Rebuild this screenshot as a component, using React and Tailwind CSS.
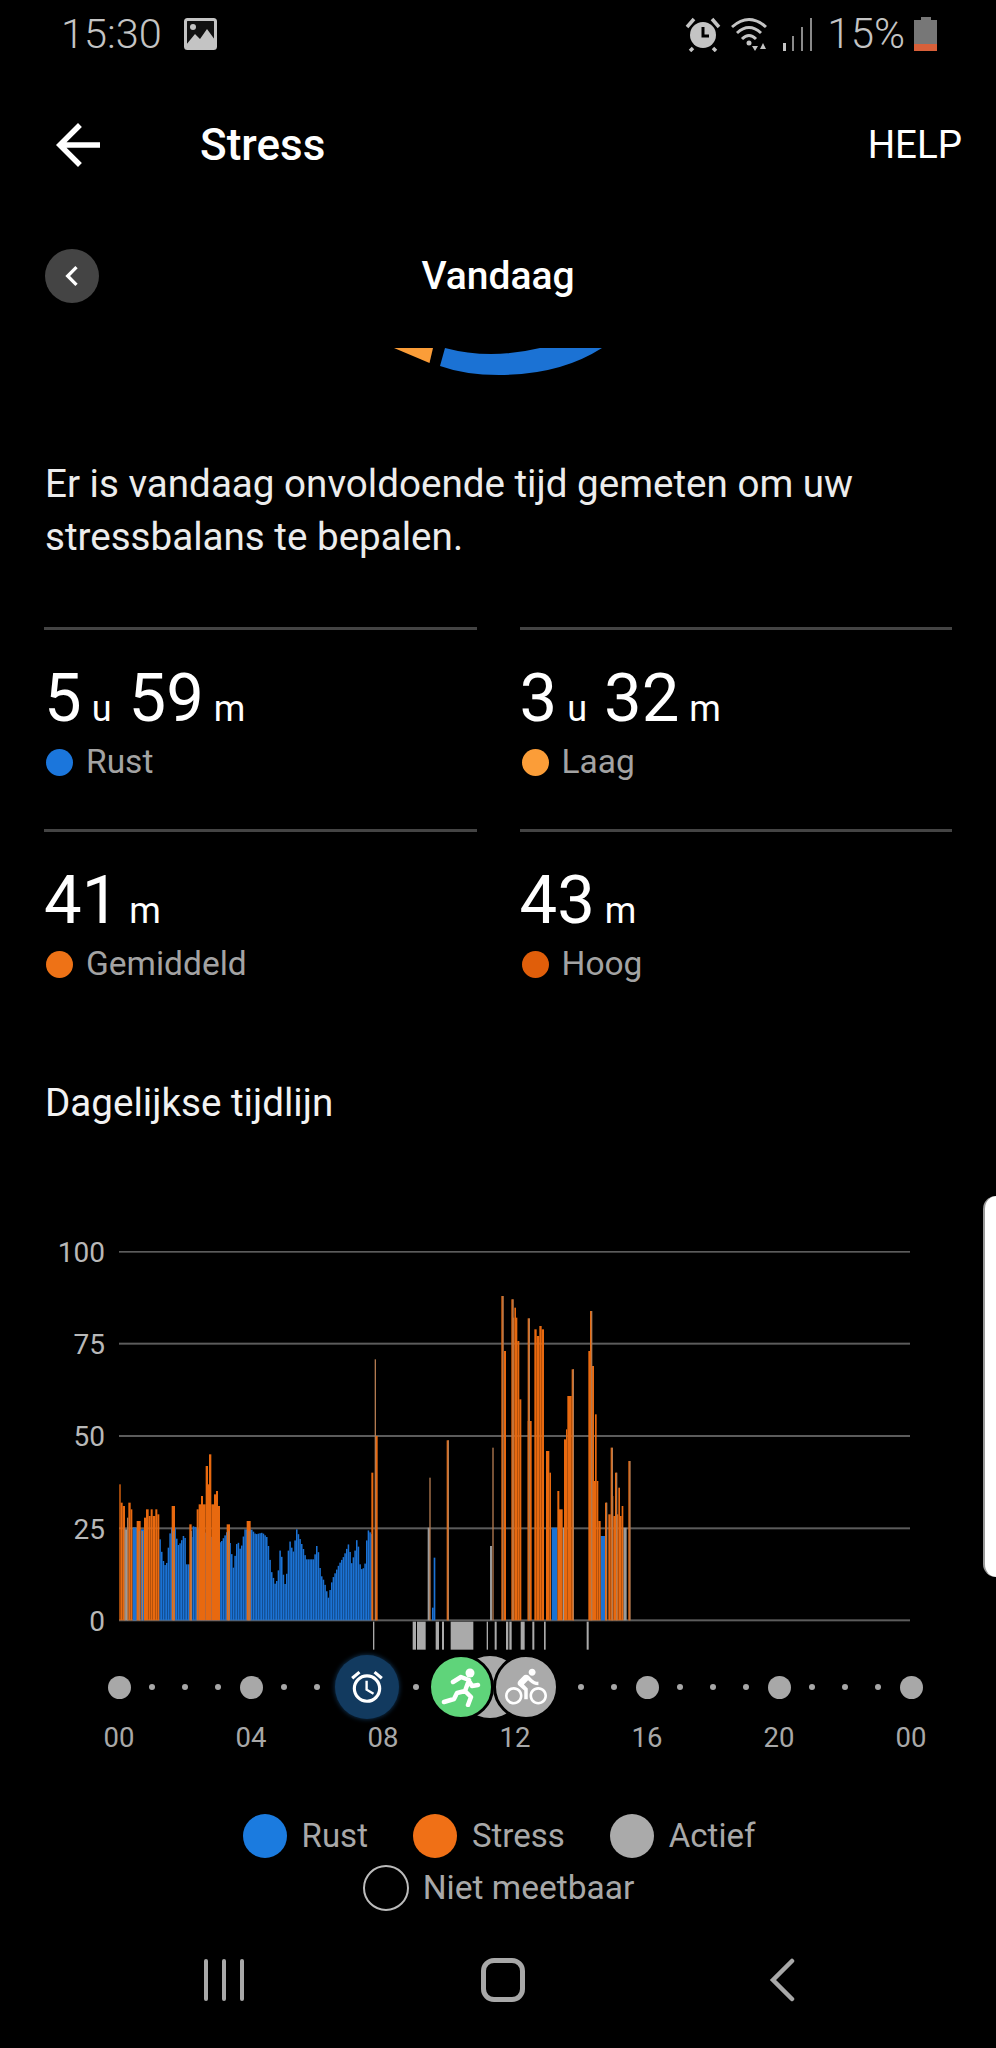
import { MdArrowBack, MdChevronLeft, MdDirectionsBike, MdAccessAlarm } from 'react-icons/md';

const ORANGE = '#e8690f';
const BLUE = '#1b72d4';
const MUTED = '#b27a50';

// chart coordinates are 3x page pixels; the baseline sits at y=1168
const blueLine = [
  [478, 925], [484, 970], [490, 1000], [497, 1005], [503, 950], [510, 890], [525, 890], [530, 945], [540, 935], [552, 905],
  [558, 1000], [568, 1000], [575, 885], [590, 890], [660, 935], [672, 915], [680, 900], [690, 945], [698, 1010], [710, 925],
  [720, 960], [732, 895], [752, 895], [765, 910], [785, 905], [800, 920], [812, 1020], [825, 1065], [832, 1030], [840, 935],
  [846, 1020], [855, 1070], [864, 945], [870, 925], [876, 975], [888, 895], [900, 930], [910, 960], [916, 985], [940, 985],
  [950, 935], [960, 1030], [970, 1050], [983, 1100], [995, 1045], [1015, 1000], [1030, 975], [1045, 935], [1052, 1000],
  [1062, 965], [1070, 915], [1078, 1000], [1085, 1020], [1094, 995], [1100, 895], [1118, 915],
];

const blueTop = (x) => {
  for (let i = 1; i < blueLine.length; i++) {
    const [x0, y0] = blueLine[i - 1];
    const [x1, y1] = blueLine[i];
    if (x <= x1) return y0 + ((y1 - y0) * (x - x0)) / (x1 - x0);
  }
  return 915;
};

const blueBars = [];
for (let x = 478; x < 1118; x += 5) blueBars.push(x);

// [start, end, top]
const greyBars = [[375, 385, 895], [398, 410, 890], [1283, 1290, 890], [1470, 1476, 945], [1688, 1692, 890], [1870, 1880, 890]];
const blueExtra = [[398, 410, 890], [422, 432, 895], [1296, 1301, 1130], [1301, 1306, 980], [1655, 1672, 890], [1802, 1815, 915]];
const orangeBars = [
  [358, 362, 760], [362, 368, 815], [368, 375, 825], [385, 392, 815], [392, 397, 835], [410, 422, 870],
  [432, 438, 860], [438, 446, 835], [446, 452, 855], [452, 458, 835], [458, 466, 855], [466, 472, 835], [472, 478, 850],
  [515, 525, 825], [568, 575, 880], [590, 596, 835], [596, 603, 820], [603, 609, 795], [609, 617, 820], [617, 624, 705],
  [624, 627, 760], [627, 634, 670], [634, 642, 820], [642, 648, 790], [648, 654, 780], [654, 660, 825], [680, 690, 880], [740, 752, 870],
  [1114, 1120, 725], [1125, 1133, 615],
  [1340, 1346, 628], [1504, 1510, 195], [1512, 1518, 360], [1534, 1540, 205], [1538, 1543, 260], [1543, 1548, 230], [1548, 1552, 260],
  [1552, 1558, 330], [1558, 1564, 505], [1583, 1588, 262], [1583, 1595, 570], [1603, 1610, 295], [1610, 1618, 315],
  [1618, 1625, 285], [1625, 1632, 295], [1638, 1648, 660], [1648, 1653, 725], [1672, 1678, 780], [1676, 1688, 835],
  [1692, 1698, 625], [1698, 1702, 595], [1702, 1715, 495], [1715, 1722, 415], [1765, 1772, 360], [1770, 1776, 240],
  [1776, 1782, 405], [1782, 1785, 750], [1785, 1790, 550], [1790, 1795, 750], [1795, 1802, 870], [1815, 1821, 815],
  [1825, 1832, 850], [1832, 1837, 650], [1835, 1840, 795], [1840, 1845, 855], [1845, 1850, 725], [1850, 1855, 850],
  [1855, 1860, 770], [1860, 1865, 855], [1865, 1870, 825], [1885, 1890, 690],
];
const mutedLines = [[372, 890], [381, 860], [416, 900], [425, 900], [519, 900], [572, 900], [684, 900], [745, 900], [1124, 385], [1288, 740], [1343, 628], [1477, 650], [1507, 195], [1537, 205], [1586, 262], [1718, 415], [1773, 240], [1818, 815], [1835, 650], [1848, 725], [1888, 690]];

const ticks = [
  [1119, 4], [1238, 10], [1251, 26], [1307, 10], [1326, 6], [1352, 68],
  [1460, 4], [1484, 6], [1518, 7], [1528, 7], [1562, 12], [1597, 6], [1632, 5], [1760, 6],
];

const hours = Array.from({ length: 25 }, (_, i) => i);

function Stat({ value, dot, label }) {
  return (
    <div className="border-t-[3px] border-[#444] h-[202px]">
      <div className="flex items-baseline h-[105px] pt-[33px] text-white">
        {value.map(([n, u]) => (
          <span key={u} className="mr-[17px]">
            <span className="text-[67px] leading-[70px]">{n}</span>
            <span className="text-[36px] ml-[10px]">{u}</span>
          </span>
        ))}
      </div>
      <div className="flex items-center mt-[7px] h-[40px]">
        <span className={`w-[27px] h-[27px] rounded-full ml-[2px] ${dot}`} />
        <span className="ml-[13px] text-[33.5px] text-[#a3a3a3]">{label}</span>
      </div>
    </div>
  );
}

function Legend({ dot, label }) {
  return (
    <div className="flex items-center">
      <span className={`w-[44px] h-[44px] rounded-full ${dot}`} />
      <span className="ml-[15px] text-[33px] text-[#a8a8a8]">{label}</span>
    </div>
  );
}

export default function App() {
  return (
    <div className="relative w-[996px] h-[2048px] overflow-hidden bg-black font-['Roboto',sans-serif]">
      {/* status bar */}
      <div className="flex items-center h-[68px] pl-[61px] pr-[59px] text-[#c4c4c4]">
        <span className="text-[41.5px] font-light">15:30</span>
        <svg className="ml-[22px]" width="33" height="32" viewBox="0 0 33 32">
          <rect x="1.5" y="1.5" width="30" height="29" rx="2" fill="#111" stroke="#c4c4c4" strokeWidth="3" />
          <circle cx="9" cy="9" r="3" fill="#c4c4c4" />
          <path d="M2 27 11 16 16 21 23 11 31 22V30H2Z" fill="#c4c4c4" />
        </svg>
        <svg className="ml-auto" width="38" height="36" viewBox="0 0 38 36">
          <circle cx="19" cy="19" r="13" fill="#c4c4c4" />
          <path d="M19 11v9h6" fill="none" stroke="#000" strokeWidth="3" />
          <path d="M3 11 10 3M35 11 28 3M9 32 6 35M29 32 32 35" stroke="#c4c4c4" strokeWidth="3.5" />
        </svg>
        <svg className="ml-[9px]" width="40" height="36" viewBox="0 0 40 36">
          <path d="M1 11Q18-4 35 11M6 17Q18 6 30 17M11 23Q18 16 25 23" fill="none" stroke="#c4c4c4" strokeWidth="3" />
          <circle cx="18" cy="27" r="2.5" fill="#c4c4c4" />
          <path d="M21 30 24 35 27 30ZM29 33 32 27 35 33Z" fill="#c4c4c4" />
        </svg>
        <svg className="ml-[11px]" width="32" height="34" viewBox="0 0 32 34">
          <rect x="1" y="26" width="3" height="8" fill="#c4c4c4" />
          <rect x="10" y="19" width="2" height="15" fill="#8a8a8a" />
          <rect x="19" y="10" width="2" height="24" fill="#8a8a8a" />
          <rect x="28" y="1" width="2" height="33" fill="#8a8a8a" />
        </svg>
        <span className="ml-[13px] text-[42px] font-light leading-none">15%</span>
        <div className="ml-[9px] flex flex-col items-center w-[23px]">
          <span className="w-[10px] h-[3px] bg-[#777]" />
          <span className="w-[23px] h-[24px] bg-[#777]" />
          <span className="w-[23px] h-[7px] bg-[#d8603a]" />
        </div>
      </div>

      {/* title bar */}
      <div className="flex items-center h-[154px] pl-[45px] pr-[34px] text-white">
        <MdArrowBack className="text-[66px]" />
        <span className="ml-[89px] text-[44px] font-medium">Stress</span>
        <span className="ml-auto text-[38.5px]">HELP</span>
      </div>

      {/* date row */}
      <div className="relative flex items-center justify-center h-[108px]">
        <span className="text-[39px] font-medium text-white">Vandaag</span>
        <button className="absolute left-[45px] top-[27px] flex items-center justify-center w-[54px] h-[54px] rounded-full bg-[#444]">
          <MdChevronLeft className="text-[40px] text-white" />
        </button>
      </div>

      {/* gauge remainder */}
      <div className="mt-[18px] h-[28px] flex justify-center">
        <svg width="996" height="28" viewBox="0 348 996 28">
          <path d="M394 348H433L429.5 363Z" fill="#fb9d38" />
          <path d="M445 348Q490 360 540 348H602Q560 375 499 375Q465 375 440 366Z" fill={BLUE} />
        </svg>
      </div>

      <p className="mt-[81px] px-[45px] text-[38.6px] leading-[53px] text-[#ececec]">
        Er is vandaag onvoldoende tijd gemeten om uw
        <br />
        stressbalans te bepalen.
      </p>

      {/* totals */}
      <div className="mt-[64px] mx-[44px] grid grid-cols-2 gap-x-[43px] h-[404px]">
        <Stat value={[['5', 'u'], ['59', 'm']]} dot="bg-[#1b76dc]" label="Rust" />
        <Stat value={[['3', 'u'], ['32', 'm']]} dot="bg-[#fb9d38]" label="Laag" />
        <Stat value={[['41', 'm']]} dot="bg-[#ee7216]" label="Gemiddeld" />
        <Stat value={[['43', 'm']]} dot="bg-[#e05e0a]" label="Hoog" />
      </div>

      <h2 className="mt-[50px] px-[45px] text-[38.6px] leading-[44px] text-[#f2f2f2]">Dagelijkse tijdlijn</h2>

      {/* chart */}
      <div className="mt-[126px] flex">
        <div className="w-[105px] h-[400px] shrink-0 text-right text-[28px] leading-[30px] text-[#b8b8b8]">
          {['100', '75', '50', '25', '0'].map((v) => (
            <div key={v} className="h-[92.2px] -translate-y-[13px] flex items-start justify-end">
              {v}
            </div>
          ))}
        </div>
        <svg className="ml-[14px]" width="791" height="400" viewBox="357 60 2373 1200">
          {[62, 338, 615, 892, 1168].map((y) => (
            <rect key={y} x="357" y={y - 3} width="2373" height="6" fill="#5c5c5c" />
          ))}
          {greyBars.map(([a, b, t]) => (
            <rect key={`g${a}`} x={a} y={t} width={b - a} height={1168 - t} fill="#9a9a9a" />
          ))}
          {blueBars.map((x) => (
            <rect key={x} x={x} y={blueTop(x)} width="4.6" height={1168 - blueTop(x)} fill={BLUE} />
          ))}
          {blueExtra.map(([a, b, t]) => (
            <rect key={`b${a}`} x={a} y={t} width={b - a} height={1168 - t} fill={BLUE} />
          ))}
          {orangeBars.map(([a, b, t]) => (
            <rect key={`o${a}-${t}`} x={a} y={t} width={b - a} height={1168 - t} fill={ORANGE} />
          ))}
          {mutedLines.map(([x, t]) => (
            <rect key={`m${x}`} x={x} y={t} width="4" height={1168 - t} fill={MUTED} />
          ))}
          {ticks.map(([x, w]) => (
            <rect key={`t${x}`} x={x} y="1172" width={w} height="84" fill="#aaa" />
          ))}
        </svg>
      </div>

      {/* activity timeline */}
      <div className="relative h-[72px] pl-[102.5px]">
        <div className="flex items-center h-[72px]">
          {hours.map((h) => (
            <div key={h} className="flex items-center justify-center w-[33px] shrink-0">
              <span className={h % 4 === 0 ? 'w-[23px] h-[23px] rounded-full bg-[#a8a8a8]' : 'w-[6px] h-[6px] rounded-full bg-[#a8a8a8]'} />
            </div>
          ))}
        </div>
        <div className="absolute left-[459px] top-[5px] w-[62px] h-[62px] rounded-full bg-[#aaa]" />
        <div className="absolute left-[335px] top-[4px] flex items-center justify-center w-[64px] h-[64px] rounded-full bg-[#123a5f] shadow-[0_0_5px_#123a5f]">
          <MdAccessAlarm className="text-[38px] text-white" />
        </div>
        <div className="absolute left-[428px] top-[3px] flex items-center justify-center w-[66px] h-[66px] rounded-full bg-[#5fd47a] border-[3px] border-black">
          <svg width="40" height="40" viewBox="0 0 40 40">
            <circle cx="29" cy="6" r="4.5" fill="#fff" />
            <path d="M12 15 20 10 28 13 24 24 30 30 27 38M28 14 31 19 37 18M24 24 16 26 13 32 3 35" fill="none" stroke="#fff" strokeWidth="4.5" strokeLinejoin="round" strokeLinecap="round" />
          </svg>
        </div>
        <div className="absolute left-[493px] top-[3px] flex items-center justify-center w-[66px] h-[66px] rounded-full bg-[#aaa] border-[3px] border-black">
          <MdDirectionsBike className="text-[42px] text-white" />
        </div>
      </div>

      {/* hour labels */}
      <div className="flex pl-[53px] text-[27.5px] leading-[30px] text-[#a8a8a8]">
        {['00', '04', '08', '12', '16', '20', '00'].map((t, i) => (
          <span key={i} className="w-[132px] shrink-0 text-center">{t}</span>
        ))}
      </div>

      {/* legend */}
      <div className="mt-[61px] flex flex-col items-center">
        <div className="flex justify-center gap-[45px] h-[44px] pl-[2px]">
          <Legend dot="bg-[#1b7bdf]" label="Rust" />
          <Legend dot="bg-[#f07016]" label="Stress" />
          <Legend dot="bg-[#aaa]" label="Actief" />
        </div>
        <div className="flex items-center mt-[7px] h-[46px] pl-[1px]">
          <span className="w-[46px] h-[46px] rounded-full border-2 border-[#bbb]" />
          <span className="ml-[14px] text-[33.5px] text-[#a8a8a8]">Niet meetbaar</span>
        </div>
      </div>

      {/* nav bar */}
      <div className="mt-[47px] relative h-[44px] flex items-center">
        <div className="ml-[204px] flex gap-[14px]">
          <span className="w-[4px] h-[42px] rounded-full bg-[#a8a8a8]" />
          <span className="w-[4px] h-[42px] rounded-full bg-[#a8a8a8]" />
          <span className="w-[4px] h-[42px] rounded-full bg-[#a8a8a8]" />
        </div>
        <span className="ml-[237px] w-[44px] h-[44px] rounded-[13px] border-[5px] border-[#a8a8a8]" />
        <svg className="ml-[244px]" width="26" height="44" viewBox="0 0 26 44">
          <path d="M23 3 4 22 23 41" fill="none" stroke="#a8a8a8" strokeWidth="4.5" strokeLinecap="round" />
        </svg>
      </div>

      {/* edge panel handle */}
      <div className="absolute left-[983px] top-[1196px] w-[13px] h-[381px] bg-white rounded-l-[14px] border-l-2 border-[#999]" />
    </div>
  );
}
